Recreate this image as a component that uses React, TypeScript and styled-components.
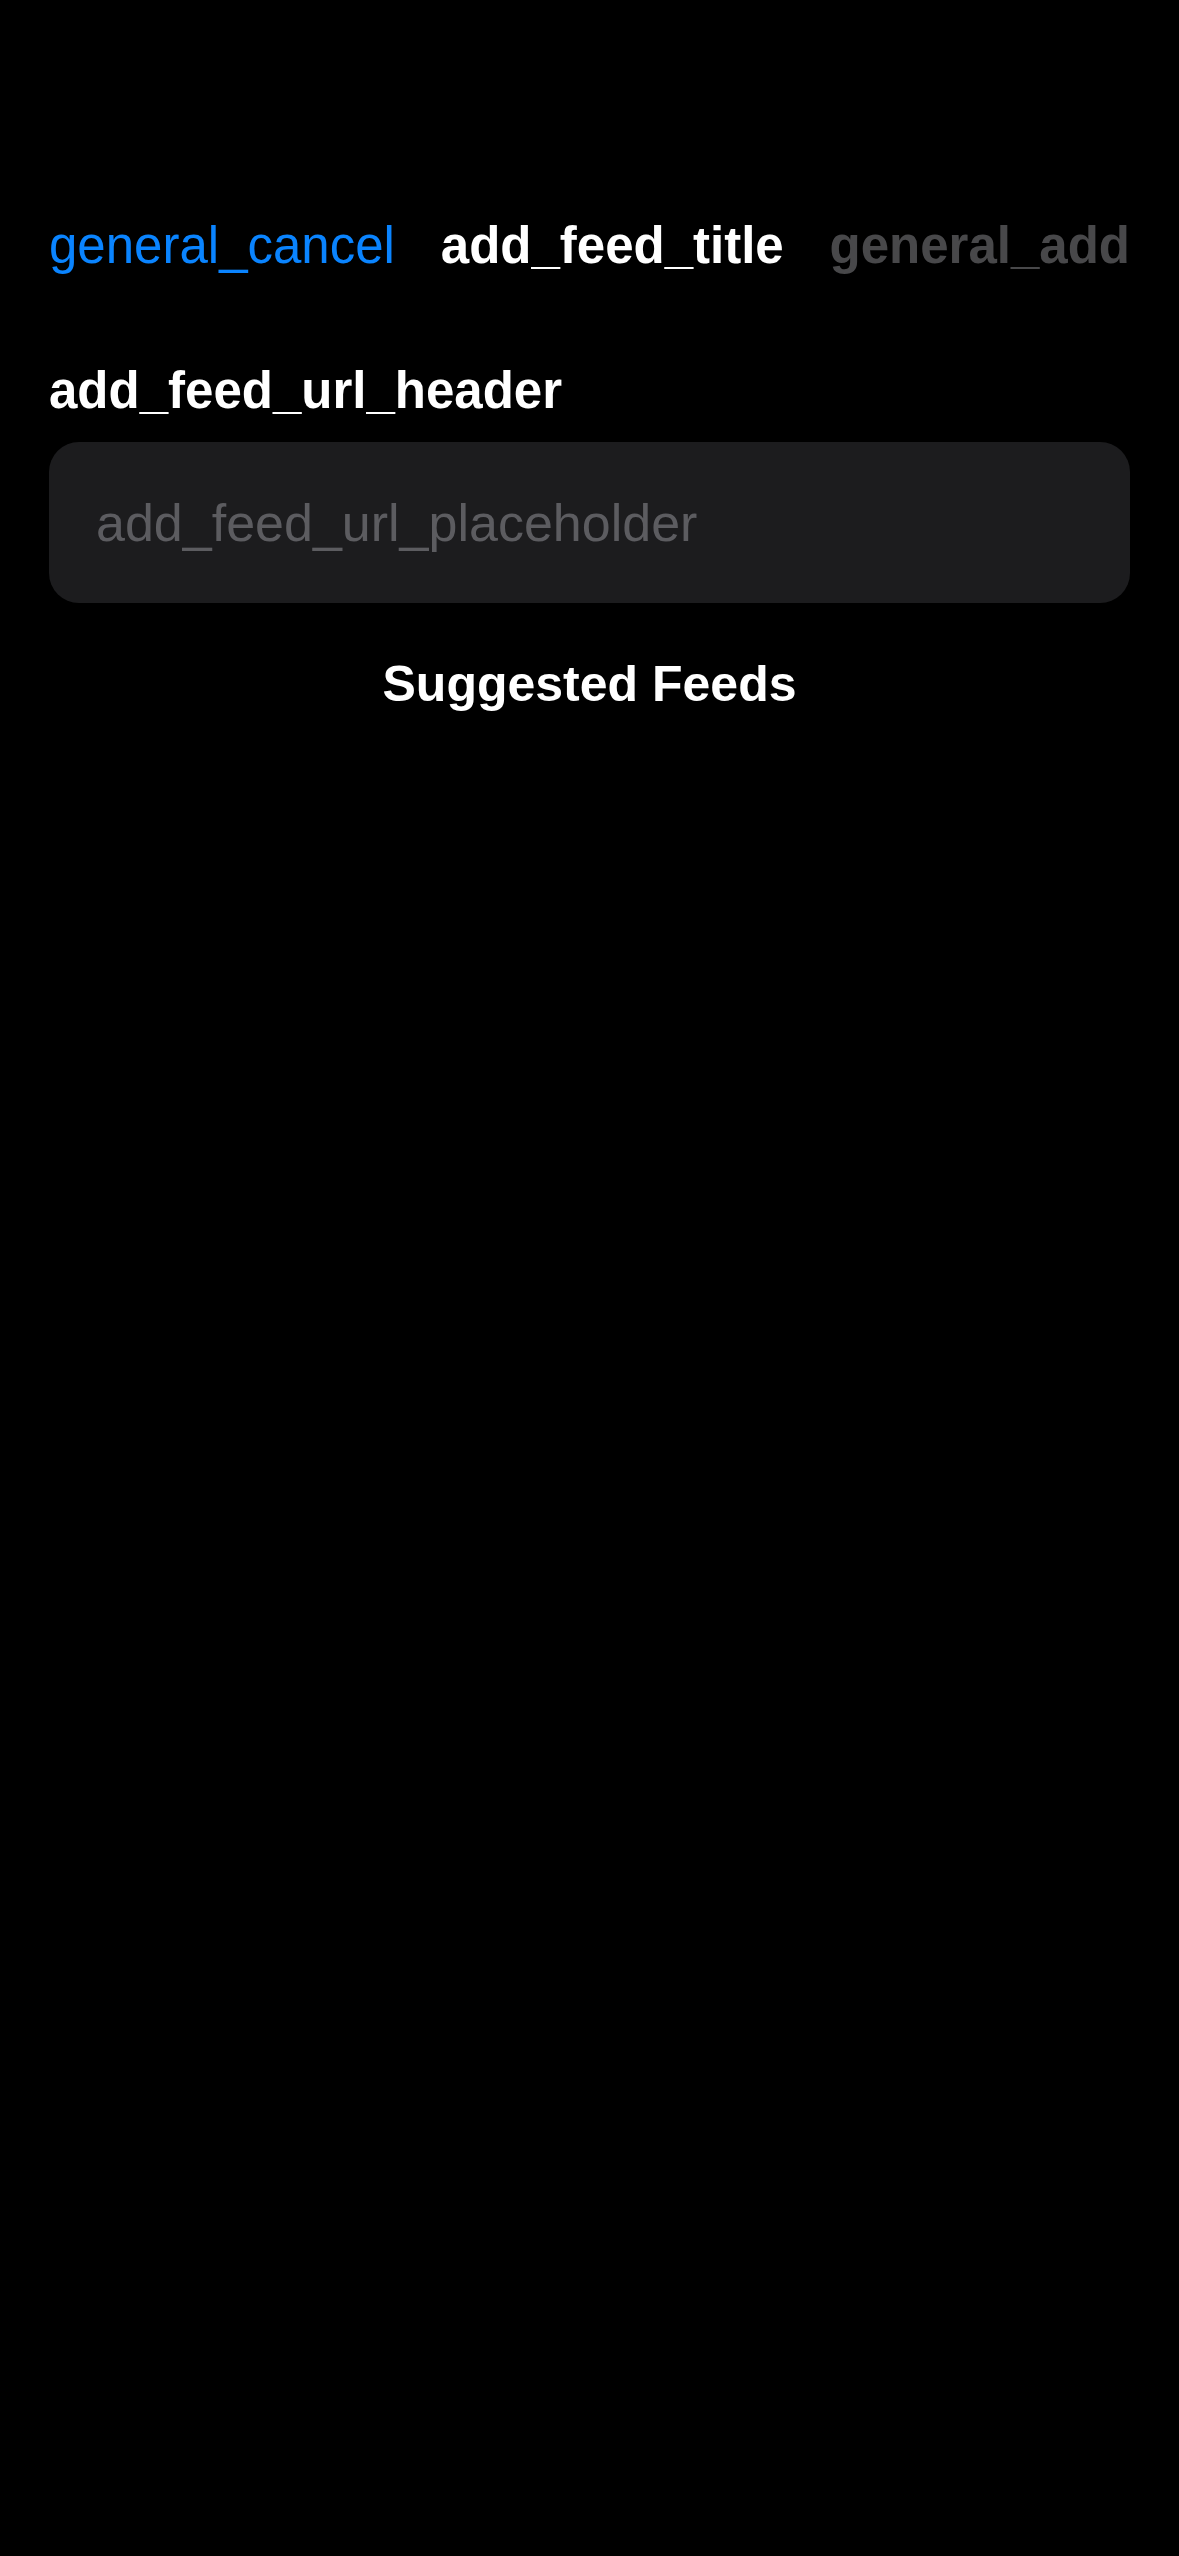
import styled, { createGlobalStyle } from 'styled-components'

const GlobalStyle = createGlobalStyle`
	html, body {
		margin: 0;
		padding: 0;
		background: #000000;
	}
	body {
		font-family: "Liberation Sans", Arial, sans-serif;
		color: #ffffff;
	}
`

const Screen = styled.div`
	min-height: 2556px;
	background: #000000;
	padding: 215px 49px 0;
	box-sizing: border-box;
`

const NavBar = styled.div`
	display: flex;
	justify-content: space-between;
	align-items: center;
	height: 61px;
`

const NavButton = styled.button<{ $tone: 'blue' | 'muted' }>`
	background: none;
	border: none;
	padding: 0;
	font-family: inherit;
	font-size: 51px;
	line-height: 61px;
	font-weight: ${(p) => (p.$tone === 'blue' ? 400 : 700)};
	color: ${(p) => (p.$tone === 'blue' ? '#0a84ff' : '#48484a')};
`

const NavTitle = styled.div`
	font-size: 51px;
	line-height: 61px;
	font-weight: 700;
	color: #ffffff;
`

const SectionHeader = styled.div`
	margin-top: 84px;
	font-size: 51px;
	line-height: 61px;
	font-weight: 700;
`

const UrlField = styled.input`
	display: block;
	box-sizing: border-box;
	width: 100%;
	height: 161px;
	margin-top: 21px;
	padding: 0 47px;
	border: none;
	border-radius: 30px;
	background: #1c1c1e;
	color: #ffffff;
	font-family: inherit;
	font-size: 52px;
	outline: none;

	&::placeholder {
		color: #5c5c60;
	}
`

const SuggestedTitle = styled.div`
	margin-top: 51px;
	text-align: center;
	font-size: 50px;
	line-height: 60px;
	font-weight: 700;
`

function App() {
	return (
		<>
			<GlobalStyle />
			<Screen>
				<NavBar>
					<NavButton $tone="blue">general_cancel</NavButton>
					<NavTitle>add_feed_title</NavTitle>
					<NavButton $tone="muted">general_add</NavButton>
				</NavBar>
				<SectionHeader>add_feed_url_header</SectionHeader>
				<UrlField type="text" placeholder="add_feed_url_placeholder" />
				<SuggestedTitle>Suggested Feeds</SuggestedTitle>
			</Screen>
		</>
	)
}

export default App
